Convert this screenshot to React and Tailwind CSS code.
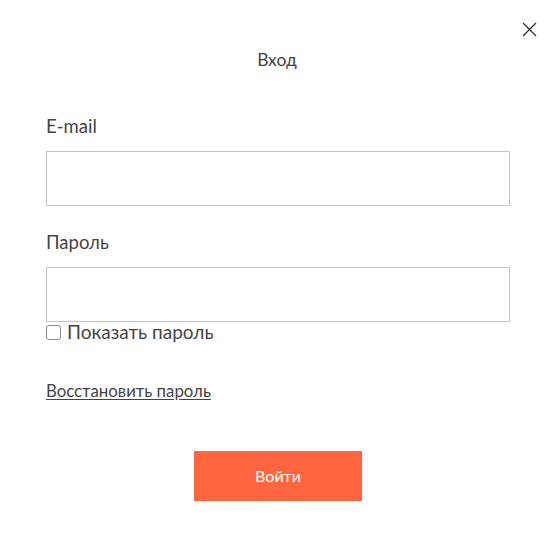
export default function App() {
  return (
    <div
      className="relative w-[552px] h-[549px] bg-white text-[#3a3a3a]"
      style={{ fontFamily: "Lato, 'Open Sans', sans-serif" }}
    >
      <button className="absolute right-[15px] top-[22px] w-[15px] h-[15px] text-[#333]">
        <svg viewBox="0 0 15 15" width="15" height="15" stroke="currentColor" strokeWidth="1.3">
          <path d="M1 1 L14 14 M14 1 L1 14" />
        </svg>
      </button>

      <div className="px-[46px] pt-[49px]">
        <h2 className="text-center text-[17.5px] leading-[22px] text-[#444] pl-[2px]">Вход</h2>

        <form className="mt-[43px] flex flex-col">
          <label className="text-[18.5px] leading-[24px] text-[#444]">E-mail</label>
          <input className="mt-[13px] h-[55px] w-[464px] border border-[#c4c4c4] outline-none px-3" />

          <label className="mt-[24px] text-[18.5px] leading-[24px] text-[#444]">Пароль</label>
          <input
            type="password"
            className="mt-[13px] h-[55px] w-[464px] border border-[#c4c4c4] outline-none px-3"
          />

          <label className="flex items-center gap-[6px] text-[19px] leading-[20px] text-[#444]">
            <span className="w-[15px] h-[15px] border border-[#8a8a8a] rounded-[3px] bg-white" />
            Показать пароль
          </label>

          <a className="mt-[39px] self-start text-[16.8px] leading-[20px] underline underline-offset-2 text-[#444]">
            Восстановить пароль
          </a>

          <button
            type="button"
            className="mt-[50px] self-start ml-[148px] w-[168px] h-[50px] bg-[#ff6640] text-white text-[16px]"
          >
            Войти
          </button>
        </form>
      </div>
    </div>
  );
}
